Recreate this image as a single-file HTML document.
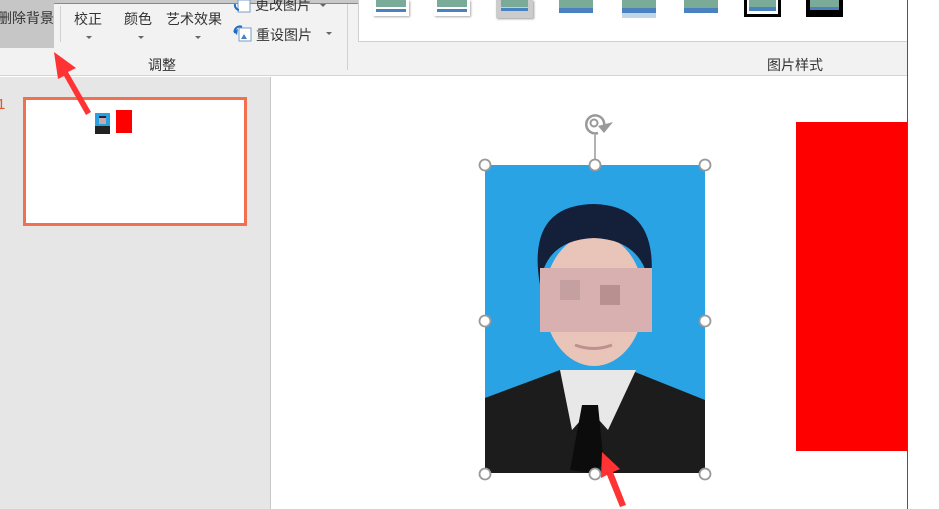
<!DOCTYPE html>
<html><head><meta charset="utf-8"><style>
*{margin:0;padding:0;box-sizing:border-box}
body{width:939px;height:509px;overflow:hidden;background:#fff;font-family:"Liberation Sans","Noto Sans CJK SC",sans-serif;position:relative}
.a{position:absolute}
.t{font-size:14px;color:#333;white-space:nowrap}
</style></head><body>
<div class="a" style="left:0;top:0;width:939px;height:76px;background:#f2f2f2;border-bottom:1px solid #d6d6d6"></div>
<div class="a" style="left:0;top:0;width:939px;height:4px;background:#c8c8c8;border-bottom:1px solid #888"></div>
<div class="a" style="left:0;top:0;width:54px;height:48px;background:#c6c6c6"></div>
<div class="a t" style="left:-2px;top:8px">删除背景</div>
<div class="a" style="left:60px;top:6px;width:1px;height:36px;background:#d0d0d0"></div>
<div class="a t" style="left:74px;top:9px">校正</div>
<div class="a t" style="left:124px;top:9px">颜色</div>
<div class="a t" style="left:166px;top:9px">艺术效果</div>
<div class="a" style="left:86px;top:36px;border:3px solid transparent;border-top:3px solid #666"></div>
<div class="a" style="left:138px;top:36px;border:3px solid transparent;border-top:3px solid #666"></div>
<div class="a" style="left:195px;top:36px;border:3px solid transparent;border-top:3px solid #666"></div>
<div class="a t" style="left:255px;top:-5px">更改图片</div>
<div class="a t" style="left:256px;top:25px">重设图片</div>
<svg class="a" style="left:233px;top:0" width="20" height="44">
<rect x="5" y="0" width="12" height="12" fill="#fff" stroke="#7a9cc4"/>
<rect x="6" y="28" width="12" height="13" fill="#fff" stroke="#7a9cc4"/>
<path d="M8 39 L11 34 L14 39Z" fill="#4a82c0"/>
<path d="M2 33 A5 5 0 0 1 9 27" stroke="#1f6fc0" stroke-width="2" fill="none"/>
<path d="M0 31 L4 35 L5 29Z" fill="#1f6fc0"/>
<path d="M2 4 A5 5 0 0 0 6 10" stroke="#1f6fc0" stroke-width="2" fill="none"/>
</svg>
<div class="a" style="left:320px;top:4px;border:3px solid transparent;border-top:3px solid #666"></div>
<div class="a" style="left:326px;top:32px;border:3px solid transparent;border-top:3px solid #666"></div>
<div class="a t" style="left:148px;top:55px">调整</div>
<div class="a" style="left:347px;top:4px;width:1px;height:66px;background:#d0d0d0"></div>
<div class="a" style="left:358px;top:0;width:550px;height:42px;background:#fff;border:1px solid #d0d0d0;border-top:none"></div>
<div class="a t" style="left:767px;top:55px">图片样式</div>
<div class="a" style="left:373px;top:0;width:36px;height:16px;background:#fff;box-shadow:1px 1px 2px #aaa"><div style="margin:0 3px;height:7px;background:#7aab98"></div><div style="margin:2px 3px;height:3px;background:#4a82c0"></div></div>
<div class="a" style="left:434px;top:0;width:36px;height:16px;background:#fff;box-shadow:1px 1px 2px #aaa"><div style="margin:0 3px;height:7px;background:#7aab98"></div><div style="margin:2px 3px;height:3px;background:#4a82c0"></div></div>
<div class="a" style="left:496px;top:0;width:37px;height:18px;background:#ccc;box-shadow:1px 1px 2px #999"><div style="margin:0 5px;height:7px;background:#7aab98"></div><div style="margin:1px 5px;height:3px;background:#4a82c0"></div></div>
<div class="a" style="left:559px;top:0;width:34px;height:14px"><div style="height:8px;background:#7aab98"></div><div style="height:5px;background:#4a82c0"></div></div>
<div class="a" style="left:622px;top:0;width:34px;height:20px"><div style="height:8px;background:#7aab98"></div><div style="height:5px;background:#4a82c0"></div><div style="height:5px;background:#c0d4ea"></div></div>
<div class="a" style="left:684px;top:0;width:34px;height:14px"><div style="height:8px;background:#7aab98"></div><div style="height:5px;background:#4a82c0"></div></div>
<div class="a" style="left:744px;top:0;width:37px;height:17px;border:3px solid #000;border-top:none;background:#fff;padding:0 2px"><div style="height:7px;background:#7aab98"></div><div style="height:4px;background:#4a82c0"></div></div>
<div class="a" style="left:806px;top:0;width:37px;height:17px;border:4px solid #000;border-top:none;background:#000"><div style="height:7px;background:#7aab98"></div><div style="height:3px;background:#4a82c0"></div></div>
<div class="a" style="left:0;top:77px;width:270px;height:432px;background:#e6e6e6"></div>
<div class="a" style="left:270px;top:77px;width:1px;height:432px;background:#c8c8c8"></div>
<div class="a" style="left:-3px;top:96px;font-size:15px;color:#e2572d">1</div>
<div class="a" style="left:23px;top:97px;width:224px;height:129px;border:3px solid #f07050;background:#fff"></div>
<div class="a" style="left:95px;top:113px;width:15px;height:21px;background:#29a0e0"><div style="position:absolute;left:4px;top:3px;width:7px;height:8px;background:#c8a8a8;border-top:2px solid #1a2540"></div><div style="position:absolute;left:0;top:13px;width:15px;height:8px;background:#222"></div></div>
<div class="a" style="left:116px;top:110px;width:16px;height:23px;background:#f00"></div>
<div class="a" style="left:907px;top:0;width:1px;height:509px;background:#555"></div>
<div class="a" style="left:908px;top:0;width:31px;height:509px;background:#fff"></div>
<div class="a" style="left:796px;top:122px;width:111px;height:329px;background:#f00"></div>
<svg class="a" style="left:0;top:0" width="939" height="509">
<rect x="485" y="165" width="220" height="308" fill="#29a3e4"/>
<path d="M485 398 L560 370 L630 370 L705 400 L705 473 L485 473Z" fill="#1c1c1c"/>
<path d="M560 370 L572 430 L590 410 L608 430 L636 370Z" fill="#e8e8e8"/>
<path d="M582 405 L598 405 L604 465 L590 473 L570 470Z" fill="#0c0c0c"/>
<ellipse cx="594" cy="300" rx="50" ry="66" fill="#e9c4b8"/>
<path d="M540 285 Q526 205 594 204 Q662 206 650 290 Q645 240 594 238 Q545 240 540 285Z" fill="#14203a"/>
<rect x="540" y="268" width="112" height="64" fill="#d8b0b0"/>
<rect x="560" y="280" width="20" height="20" fill="#c4a0a0"/><rect x="600" y="285" width="20" height="20" fill="#b89090"/>
<path d="M575 345 Q594 352 612 345" stroke="#c09090" stroke-width="3" fill="none"/>
<g fill="#fff" stroke="#999" stroke-width="1.8">
<circle cx="485" cy="165" r="5.5"/><circle cx="595" cy="165" r="5.5"/><circle cx="705" cy="165" r="5.5"/>
<circle cx="485" cy="321" r="5.5"/><circle cx="705" cy="321" r="5.5"/>
<circle cx="485" cy="474" r="5.5"/><circle cx="595" cy="474" r="5.5"/><circle cx="705" cy="474" r="5.5"/>
</g>
<line x1="595" y1="135" x2="595" y2="159" stroke="#999" stroke-width="1.5"/>
<path d="M603 129 A9 9 0 1 0 598 133" stroke="#999" stroke-width="2.5" fill="none"/>
<circle cx="594" cy="123" r="3.5" fill="none" stroke="#999" stroke-width="2"/>
<path d="M598 126 L613 122 L604 133Z" fill="#999"/>
<path d="M91 112 L68 72 L76 68 L54 52 L58 79 L64 76 L86 115Z" fill="#f33"/>
<path d="M626 505 L613 472 L620 469 L602 452 L601 478 L607 475 L620 507Z" fill="#f33"/>
</svg>
</body></html>
